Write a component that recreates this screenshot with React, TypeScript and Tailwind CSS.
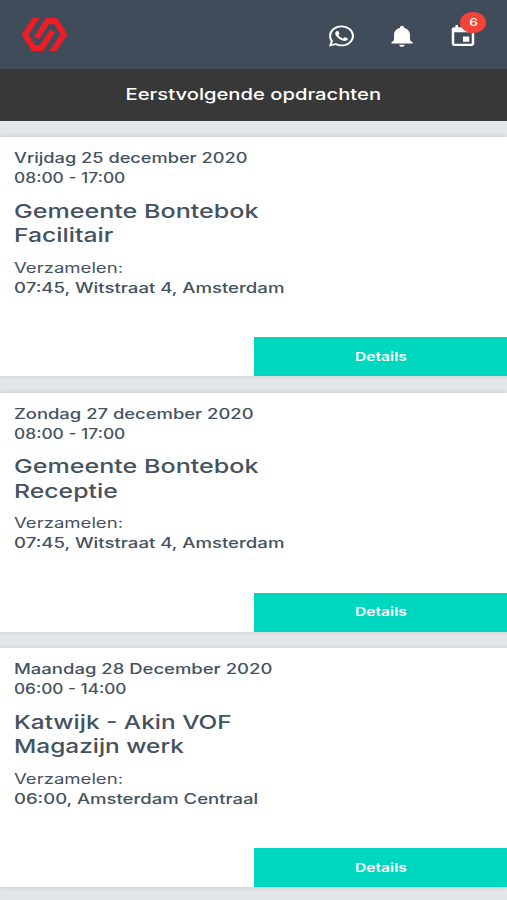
import { MdEvent, MdNotifications } from 'react-icons/md';
import { FaWhatsapp } from 'react-icons/fa';

const jobs = [
  {
    date: { text: 'Vrijdag 25 december 2020', stretch: 'scale-x-[1.3]' },
    time: { text: '08:00 - 17:00', stretch: 'scale-x-[1.24]' },
    client: { text: 'Gemeente Bontebok', stretch: 'scale-x-[1.32]' },
    role: { text: 'Facilitair', stretch: 'scale-x-[1.3]' },
    meet: { text: '07:45, Witstraat 4, Amsterdam', stretch: 'scale-x-[1.328]' },
  },
  {
    date: { text: 'Zondag 27 december 2020', stretch: 'scale-x-[1.315]' },
    time: { text: '08:00 - 17:00', stretch: 'scale-x-[1.24]' },
    client: { text: 'Gemeente Bontebok', stretch: 'scale-x-[1.32]' },
    role: { text: 'Receptie', stretch: 'scale-x-[1.305]' },
    meet: { text: '07:45, Witstraat 4, Amsterdam', stretch: 'scale-x-[1.328]' },
  },
  {
    date: { text: 'Maandag 28 December 2020', stretch: 'scale-x-[1.32]' },
    time: { text: '06:00 - 14:00', stretch: 'scale-x-[1.23]' },
    client: { text: 'Katwijk - Akin VOF', stretch: 'scale-x-[1.285]' },
    role: { text: 'Magazijn werk', stretch: 'scale-x-[1.285]' },
    meet: { text: '06:00, Amsterdam Centraal', stretch: 'scale-x-[1.322]' },
  },
];

type LineText = { text: string; stretch: string };

function Line({ text, stretch }: LineText) {
  return <p className={`w-max origin-left whitespace-nowrap ${stretch}`}>{text}</p>;
}

function Logo() {
  return (
    <svg viewBox="0 0 47 33" className="h-[33px] w-[47px] overflow-hidden" fill="none" stroke="#ee1c25" strokeWidth="5.8">
      <path d="M18 -4L4 16.5L12.5 30H20.5L31.5 13" />
      <path d="M15.5 20L26.5 3H34.5L43 16.5L29 37" />
    </svg>
  );
}

export default function App() {
  return (
    <div className="h-[900px] w-[507px] overflow-hidden bg-[#e4e7ea] font-['Inter',sans-serif] text-[#44525f]">
      <header className="flex h-[69px] items-center bg-[#404c5a] pl-[21px] text-white">
        <Logo />
        <div className="ml-auto flex items-center pt-[3px]">
          <FaWhatsapp preserveAspectRatio="none" className="h-6 w-[25px]" />
          <MdNotifications preserveAspectRatio="none" className="ml-8 h-[26px] w-8" />
          <div className="relative mr-[29px] ml-[30px]">
            <MdEvent preserveAspectRatio="none" className="h-[25px] w-[30px]" />
            <span className="absolute -top-[12px] left-[12px] flex h-[21px] w-[26px] items-center justify-center rounded-[50%] bg-[#f44336] text-[11px] font-medium">
              <span className="scale-x-[1.25]">6</span>
            </span>
          </div>
        </div>
      </header>

      <div className="flex h-[52px] items-center justify-center bg-[#383838] pb-[2px] text-base font-medium text-white">
        <h1 className="scale-x-[1.262] whitespace-nowrap">Eerstvolgende opdrachten</h1>
      </div>

      <main className="flex flex-col gap-[16.5px] pt-4">
        {jobs.map(({ date, time, client, role, meet }) => (
          <article key={date.text} className="flex h-[239px] shrink-0 flex-col bg-white pt-[11px] shadow-[0_0_5px_rgba(60,70,80,0.2)]">
            <div className="pl-[14px] text-sm leading-5 font-medium">
              <Line {...date} />
              <Line {...time} />
              <div className="mt-[11.5px] mb-[9px] text-[19px] leading-[24.5px]">
                <Line {...client} />
                <Line {...role} />
              </div>
              <p className="w-max origin-left scale-x-[1.325] font-normal">Verzamelen:</p>
              <Line {...meet} />
            </div>
            <button className="mt-auto ml-auto flex h-[39px] w-[253px] items-center justify-center bg-[#00d7bf] text-xs font-semibold text-white">
              <span className="scale-x-[1.3]">Details</span>
            </button>
          </article>
        ))}
      </main>
    </div>
  );
}
